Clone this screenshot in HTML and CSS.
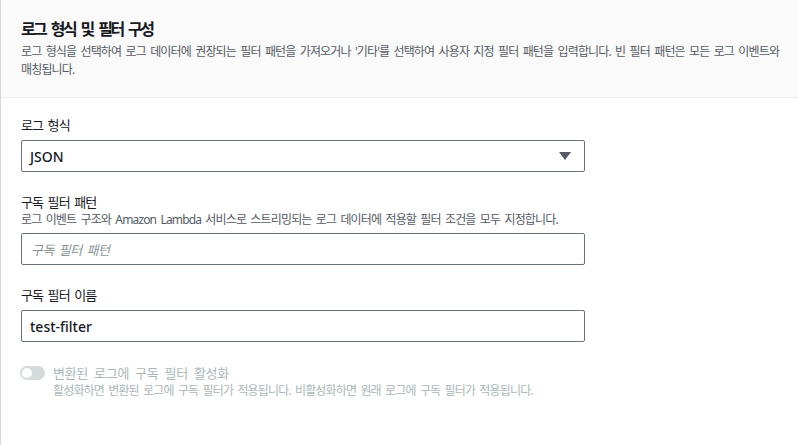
FILE: index.html
```html
<!DOCTYPE html>
<html lang="ko">

<head>
    <meta charset="UTF-8" />
    <meta name="viewport" content="width=device-width, initial-scale=1.0" />
    <title>로그 형식 및 필터 구성</title>
    <link rel="stylesheet" href="styles.css">
</head>

<body>
    <div class="panel">
        <div class="panel-header">
            <h2>로그 형식 및 필터 구성</h2>
            <p class="desc">로그 형식을 선택하여 로그 데이터에 권장되는 필터 패턴을 가져오거나 '기타'를 선택하여 사용자 지정 필터 패턴을 입력합니다. 빈 필터 패턴은 모든 로그 이벤트와 매칭됩니다.</p>
        </div>

        <div class="panel-body">
            <div class="field">
                <label class="label spaced">로그 형식</label>
                <div class="select">
                    <span class="value">JSON</span>
                    <svg class="caret" width="12" height="8" viewBox="0 0 12 8"><polygon points="0,0 12,0 6,8" fill="#545b64"/></svg>
                </div>
            </div>

            <div class="field">
                <label class="label">구독 필터 패턴</label>
                <p class="desc hint">로그 이벤트 구조와 Amazon Lambda 서비스로 스트리밍되는 로그 데이터에 적용할 필터 조건을 모두 지정합니다.</p>
                <div class="input"><span class="placeholder">구독 필터 패턴</span></div>
            </div>

            <div class="field">
                <label class="label spaced">구독 필터 이름</label>
                <div class="input"><span class="value">test-filter</span></div>
            </div>

            <div class="toggle-row">
                <span class="toggle"><span class="knob"></span></span>
                <div>
                    <div class="toggle-label">변환된 로그에 구독 필터 활성화</div>
                    <p class="desc muted">활성화하면 변환된 로그에 구독 필터가 적용됩니다. 비활성화하면 원래 로그에 구독 필터가 적용됩니다.</p>
                </div>
            </div>
        </div>
    </div>
</body>

</html>
```

FILE: styles.css
```css
:root{
    --text: #16191f;
    --grey: #545b64;
    --muted: #aab7b8;
    --line: #eaeded;
    --field: #687078;
}

*{
    margin: 0;
    padding: 0;
    box-sizing: border-box;
}
body{
    background-color: #ffffff;
    color: var(--text);
    font-family: "Noto Sans", "Noto Sans CJK KR", sans-serif;
}
.panel{
    border-left: 1px solid #d5dbdb;
    min-height: 445px;
}
.panel-header{
    background-color: #fafafa;
    border-bottom: 1px solid var(--line);
    padding: 18px 12px 18px 20px;
}
.panel-header h2{
    font-size: 16px;
    line-height: 22px;
    font-weight: 700;
    letter-spacing: -2.6px;
    word-spacing: 4px;
    margin-bottom: 3px;
}
.desc{
    font-size: 12px;
    line-height: 18px;
    color: var(--grey);
    letter-spacing: -0.85px;
    word-spacing: 2px;
}
.panel-body{
    padding: 18px 20px;
}
.field{
    width: 564px;
    margin-bottom: 21px;
}
.label{
    display: block;
    font-size: 13px;
    line-height: 18px;
    letter-spacing: -0.9px;
    word-spacing: 2px;
}
.label.spaced{
    margin-bottom: 6px;
}
.hint{
    margin-bottom: 4px;
}
.select, .input{
    display: flex;
    align-items: center;
    height: 32px;
    border: 1px solid var(--field);
    border-radius: 2px;
    padding: 0 10px 0 8px;
}
.select{
    justify-content: space-between;
}
.caret{
    margin-right: 3px;
}
.value{
    font-size: 14px;
    font-weight: 500;
}
.placeholder{
    font-size: 13px;
    font-style: italic;
    color: #879596;
    letter-spacing: -0.5px;
    word-spacing: 2px;
    padding-left: 1px;
}
.toggle-row{
    display: flex;
    gap: 8px;
    margin-top: 22px;
}
.toggle{
    display: flex;
    align-items: center;
    width: 25px;
    height: 14px;
    margin-top: 2px;
    margin-left: -1px;
    border-radius: 7px;
    background-color: #d5dbdb;
    padding: 2px;
}
.knob{
    width: 10px;
    height: 10px;
    border-radius: 50%;
    background-color: #ffffff;
}
.toggle-label{
    font-size: 13px;
    line-height: 18px;
    color: var(--muted);
    letter-spacing: -0.3px;
    word-spacing: 3px;
}
.muted{
    color: var(--muted);
}
```
